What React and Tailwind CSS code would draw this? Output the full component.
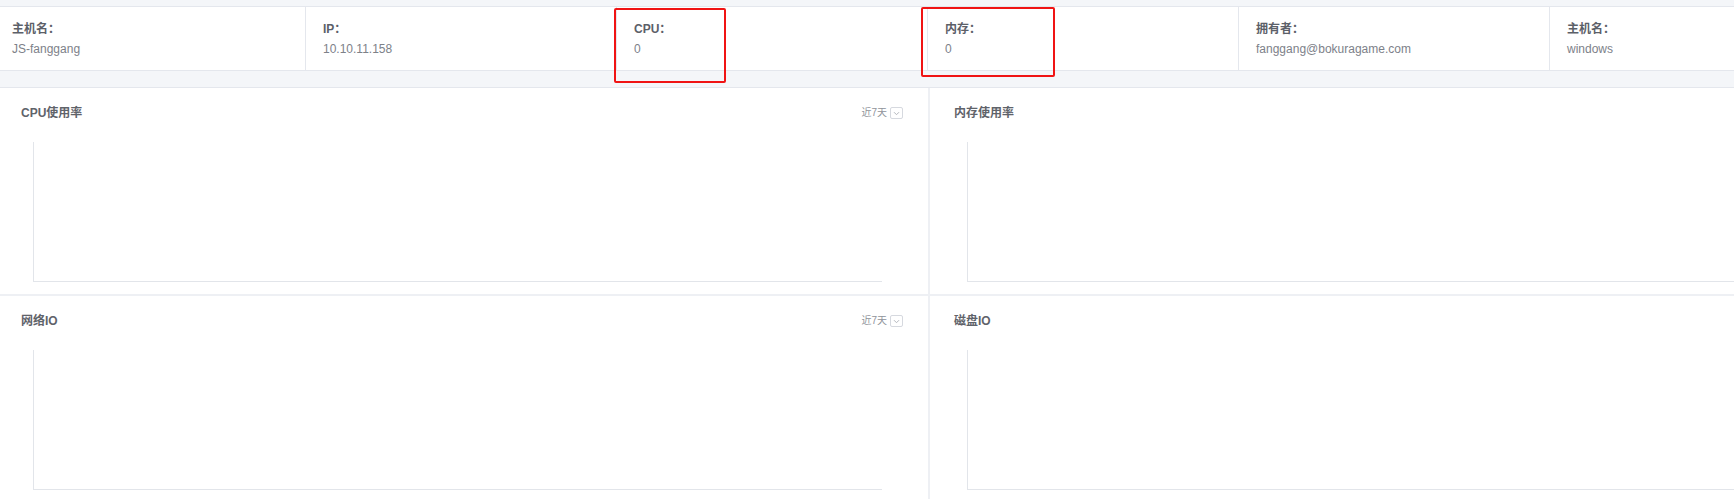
const FONT = {
  fontFamily: '"Liberation Sans", "Noto Sans CJK SC", sans-serif',
};

const HOST_INFO = [
  { label: "主机名：", value: "JS-fanggang" },
  { label: "IP：", value: "10.10.11.158" },
  { label: "CPU：", value: "0" },
  { label: "内存：", value: "0" },
  { label: "拥有者：", value: "fanggang@bokuragame.com" },
  { label: "主机名：", value: "windows" },
];

const CHARTS = [
  { title: "CPU使用率", range: true, side: "left" },
  { title: "内存使用率", range: false, side: "right" },
  { title: "网络IO", range: true, side: "left" },
  { title: "磁盘IO", range: false, side: "right" },
];

const RangeSelect = () => (
  <div className="flex items-center gap-[3px]">
    <span className="text-[10px] leading-[12px] text-[#8f939a]">近7天</span>
    <span className="flex items-center justify-center w-[13px] h-[12px] border border-[#d6d9df] rounded-[2px] bg-white">
      <svg width="7" height="5" viewBox="0 0 7 5" fill="none">
        <path d="M1 1.2 3.5 3.7 6 1.2" stroke="#b4b7bd" strokeWidth="1" />
      </svg>
    </span>
  </div>
);

const ChartPanel = ({ title, range, side }) => {
  const isLeft = side === "left";
  return (
    <div className="bg-white h-[206px] pt-[17px] pb-[12px]">
      <div
        className={`flex items-center justify-between h-[16px] ${
          isLeft ? "pl-[21px] pr-[25px]" : "pl-[24px] pr-[25px]"
        }`}
      >
        <span className="text-[12px] leading-[16px] font-bold text-[#5f636a]">
          {title}
        </span>
        {range && <RangeSelect />}
      </div>
      <div
        className={`mt-[21px] h-[140px] border-l border-b border-[#e2e5ea] ${
          isLeft ? "ml-[33px] mr-[46px]" : "ml-[37px] mr-[46px]"
        }`}
      />
    </div>
  );
};

export default function App() {
  return (
    <div className="w-full h-[499px] overflow-hidden bg-white" style={FONT}>
      <div className="relative w-[1866px]">
        <div className="h-[7px] bg-[#f4f6f9] border-b border-[#e4e7ed]" />

        <div className="flex h-[64px] bg-white border-b border-[#e4e7ed]">
          {HOST_INFO.map((item, i) => (
            <div key={i} className="w-[311px] shrink-0">
              <div className="w-[306px] h-full border-r border-[#e4e7ed] pl-[12px] pt-[12px]">
                <div className="text-[12px] leading-[20px] font-bold text-[#5c6068]">
                  {item.label}
                </div>
                <div className="text-[12px] leading-[20px] text-[#7d8189]">
                  {item.value}
                </div>
              </div>
            </div>
          ))}
        </div>

        <div className="h-[17px] bg-[#f4f6f9] border-b border-[#e4e7ed]" />

        <div className="grid grid-cols-[928px_928px] gap-[2px] bg-[#eef0f4]">
          {CHARTS.map((c) => (
            <ChartPanel key={c.title} {...c} />
          ))}
        </div>

        {/* annotation boxes */}
        <div className="absolute left-[614px] top-[8px] w-[112px] h-[75px] border-[2.5px] border-[#f01414] rounded-[2px]" />
        <div className="absolute left-[921px] top-[7px] w-[134px] h-[70px] border-[2.5px] border-[#f01414] rounded-[2px]" />
      </div>
    </div>
  );
}
